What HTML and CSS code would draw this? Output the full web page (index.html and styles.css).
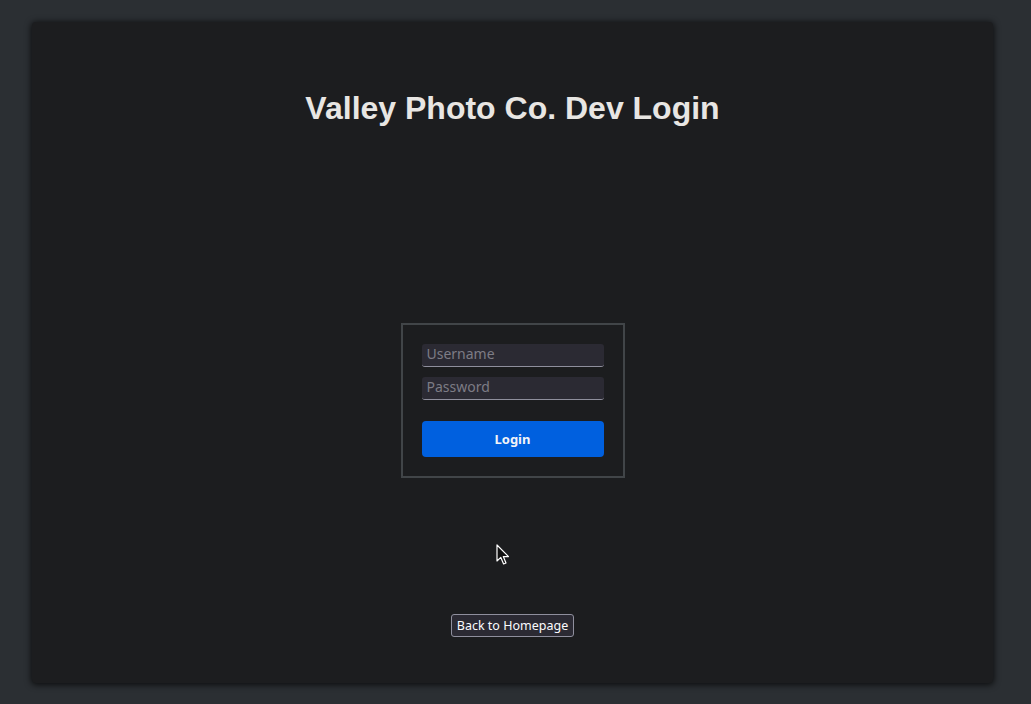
FILE: index.html
```html
<!DOCTYPE html>
<html lang="en">
<head>
<meta charset="utf-8">
<title>Valley Photo Co. Dev Login</title>
<link rel="stylesheet" href="styles.css">
</head>
<body>
<main class="card">
  <h1 class="title">Valley Photo Co. Dev Login</h1>
  <form class="login-box">
    <input class="field" type="text" placeholder="Username">
    <input class="field" type="password" placeholder="Password">
    <button class="login-btn" type="button">Login</button>
  </form>
  <button class="back-btn" type="button">Back to Homepage</button>
</main>
<svg class="cursor" width="14" height="22" viewBox="0 0 14 22">
  <path d="M1 1 L1 17 L4.8 13.4 L7.6 20 L10 19 L7.3 12.6 L12.5 12.6 Z" fill="#111" stroke="#fff" stroke-width="1.2" stroke-linejoin="round"/>
</svg>
</body>
</html>
```
FILE: styles.css
```css
html, body {
  margin: 0;
  padding: 0;
  background: #2b2f33;
  height: 100%;
  overflow: hidden;
}
body {
  position: relative;
  font-family: "Noto Sans", "Open Sans", sans-serif;
}
.card {
  margin: 22px 0 0 32px;
  width: 961px;
  height: 661px;
  box-sizing: border-box;
  background: #1c1d1f;
  border-radius: 4px;
  box-shadow: 0 1px 6px 1px rgba(0, 0, 0, 0.7);
  display: flex;
  flex-direction: column;
  align-items: center;
  padding-top: 68px;
}
.title {
  margin: 0;
  font-family: "Liberation Sans", Arial, sans-serif;
  font-weight: bold;
  font-size: 32px;
  line-height: 37px;
  color: #e8e6e3;
}
.login-box {
  margin: 196px 0 0 0;
  width: 224px;
  box-sizing: border-box;
  border: 2px solid #414548;
  padding: 19px;
  display: flex;
  flex-direction: column;
}
.field {
  width: 182px;
  height: 23px;
  box-sizing: border-box;
  margin: 0;
  padding: 0 5px 3px;
  border: none;
  border-bottom: 1px solid #8f8f9d;
  border-radius: 3px;
  background: #2b2a33;
  color: #fbfbfe;
  font-family: "Noto Sans", sans-serif;
  font-size: 14px;
  outline: none;
}
.field::placeholder {
  color: #7d7c85;
}
.field + .field {
  margin-top: 10px;
}
.login-btn {
  margin-top: 21px;
  width: 182px;
  height: 36px;
  border: none;
  border-radius: 4px;
  background: #0060df;
  color: #f2f4f8;
  font-family: "Noto Sans", sans-serif;
  font-weight: bold;
  font-size: 13px;
  padding: 0;
}
.back-btn {
  margin-top: 136px;
  height: 23px;
  padding: 0 5px;
  border: 1px solid #8f8f9d;
  border-radius: 3px;
  background: #2b2a33;
  color: #fbfbfe;
  font-family: "Noto Sans", sans-serif;
  font-size: 12.5px;
  line-height: 20px;
}
.cursor {
  position: absolute;
  left: 496px;
  top: 544px;
}
```
